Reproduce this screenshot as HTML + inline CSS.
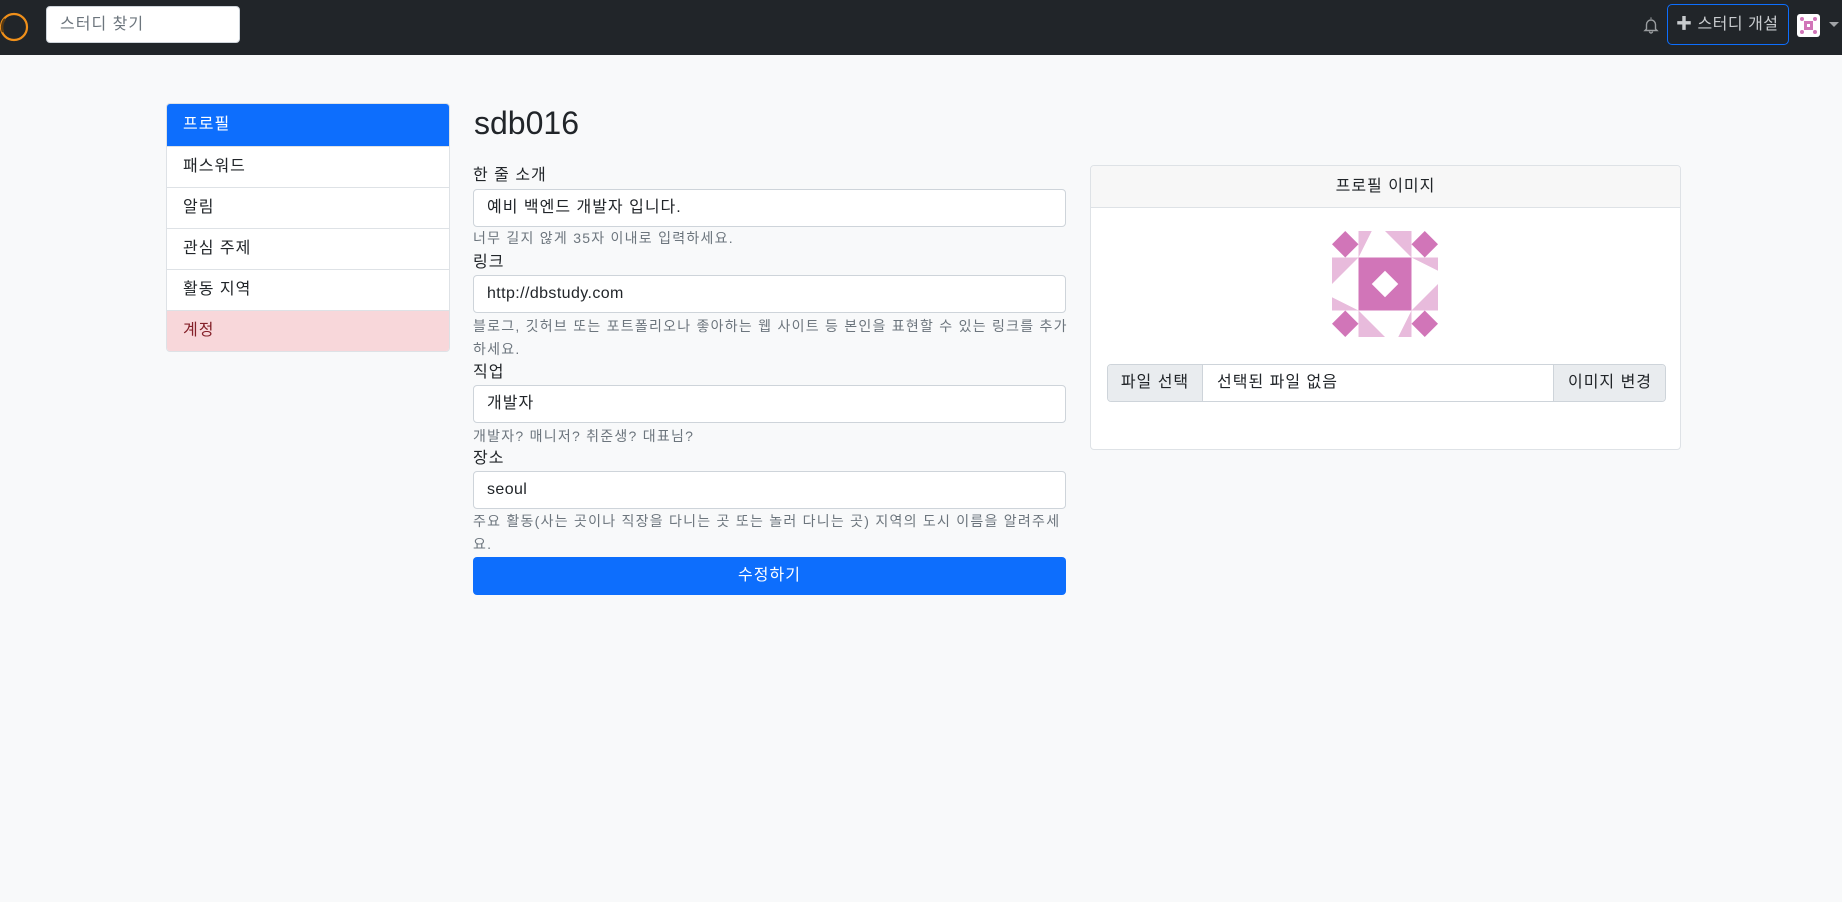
<!DOCTYPE html>
<html><head><meta charset="utf-8">
<style>
*{box-sizing:border-box;margin:0;padding:0}
body{width:1842px;height:902px;background:#f8f9fa;font-family:"Liberation Sans","Noto Sans CJK KR",sans-serif;color:#212529;font-size:16px;position:relative;overflow:hidden;letter-spacing:1px}
.nav{position:absolute;left:0;top:0;width:1842px;height:55px;background:#212529}
.abs{position:absolute}
.search{left:46px;top:6px;width:194px;height:37px;background:#fff;border:1px solid #ced4da;border-radius:4px;color:#6c757d;font-size:16px;line-height:35px;padding-left:13px}
.side{left:166px;top:103px;width:284px;border:1px solid #dee2e6;border-radius:4px;overflow:hidden;background:#fff}
.side div{height:41px;line-height:40px;padding-left:16px;border-top:1px solid #dee2e6;font-size:16px}
.side div:first-child{border-top:none;background:#0d6efd;color:#fff;height:42px;line-height:42px}
.side div.acc{background:#f8d7da;color:#842029}
.lab{left:473px;font-size:16px;line-height:24px}
.inp{left:473px;width:593px;height:38px;background:#fff;border:1px solid #ced4da;border-radius:4px;font-size:16px;line-height:36px;padding-left:13px}
.help{left:473px;font-size:14px;color:#6c757d;line-height:23px;white-space:nowrap;letter-spacing:1.25px}
.btn{left:473px;top:557px;width:593px;height:38px;background:#0d6efd;border-radius:4px;color:#fff;text-align:center;line-height:38px;font-size:16px}
.card{left:1090px;top:165px;width:591px;height:285px;background:#fff;border:1px solid #dee2e6;border-radius:4px;overflow:hidden}
.card .hd{height:42px;background:#f7f7f7;border-bottom:1px solid #dee2e6;text-align:center;line-height:41px;font-size:16px}
.lat{letter-spacing:0.4px}
</style></head><body>
<div class="nav">
<svg class="abs" style="left:0;top:12px" width="30" height="30" viewBox="0 0 30 30"><circle cx="14" cy="15" r="13" fill="none" stroke="#f0901a" stroke-width="2.2"/><path d="M3 20 A13 13 0 0 1 5 7" fill="none" stroke="#5a3a10" stroke-width="2.4"/></svg>
<div class="abs search">스터디 찾기</div>
<svg class="abs" style="left:1643px;top:16px" width="16" height="18" viewBox="0 0 16 18"><path d="M8 1.5v1.2M3.5 13V8.5a4.5 4.5 0 0 1 9 0V13l1.5 1.5H2z M6.5 15.5a1.5 1.5 0 0 0 3 0" fill="none" stroke="#9a9da0" stroke-width="1.4"/></svg>
<div class="abs" style="left:1667px;top:4px;width:122px;height:41px;border:1px solid #0d6efd;border-radius:5px;color:#c8cbce;font-size:16px;line-height:39px;padding-left:8px;white-space:nowrap;letter-spacing:0.5px"><span style="font-weight:bold;color:#c8cbce">✚</span> 스터디 개설</div>
<div class="abs" style="left:1797px;top:14px;width:23px;height:23px;background:#fff;border-radius:3px">
<svg width="23" height="23" viewBox="0 0 23 23"><rect x="7" y="7" width="9" height="9" fill="#d175b8"/><rect x="10" y="10" width="3" height="3" fill="#fff"/><circle cx="5" cy="5" r="2" fill="#d175b8"/><circle cx="18" cy="5" r="2" fill="#d175b8"/><circle cx="5" cy="18" r="2" fill="#d175b8"/><circle cx="18" cy="18" r="2" fill="#d175b8"/></svg></div>
<svg class="abs" style="left:1829px;top:22px" width="10" height="6" viewBox="0 0 10 6"><path d="M0 0h10L5 5z" fill="#a0a3a6"/></svg>
</div>

<div class="abs side">
<div>프로필</div><div>패스워드</div><div>알림</div><div>관심 주제</div><div>활동 지역</div><div class="acc">계정</div>
</div>

<div class="abs" style="left:474px;top:103px;font-size:32px;line-height:40px;letter-spacing:0">sdb016</div>

<div class="abs lab" style="top:164px">한 줄 소개</div>
<div class="abs inp" style="top:189px">예비 백엔드 개발자 입니다.</div>
<div class="abs help" style="top:227px">너무 길지 않게 35자 이내로 입력하세요.</div>
<div class="abs lab" style="top:251px">링크</div>
<div class="abs inp lat" style="top:275px">http://dbstudy.com</div>
<div class="abs help" style="top:315px">블로그, 깃허브 또는 포트폴리오나 좋아하는 웹 사이트 등 본인을 표현할 수 있는 링크를 추가<br>하세요.</div>
<div class="abs lab" style="top:361px">직업</div>
<div class="abs inp" style="top:385px">개발자</div>
<div class="abs help" style="top:425px">개발자? 매니저? 취준생? 대표님?</div>
<div class="abs lab" style="top:447px">장소</div>
<div class="abs inp lat" style="top:471px">seoul</div>
<div class="abs help" style="top:510px">주요 활동(사는 곳이나 직장을 다니는 곳 또는 놀러 다니는 곳) 지역의 도시 이름을 알려주세<br>요.</div>
<div class="abs btn">수정하기</div>

<div class="abs card"><div class="hd">프로필 이미지</div></div>
<svg class="abs" style="left:1332px;top:231px" width="106" height="106" viewBox="0 0 4 4" preserveAspectRatio="none">
<g fill="#e8bbdc">
<polygon points="1,0 1.5,0 1,1"/><polygon points="2,0 3,0 3,1"/>
<polygon points="3,1 4,1 4,1.5"/><polygon points="4,2 4,3 3,3"/>
<polygon points="3,4 2.5,4 3,3"/><polygon points="2,4 1,4 1,3"/>
<polygon points="1,3 0,3 0,2.5"/><polygon points="0,2 0,1 1,1"/>
</g>
<rect x="1" y="1" width="2" height="2" fill="#d175b8"/>
<polygon points="2,1.5 2.5,2 2,2.5 1.5,2" fill="#fff"/>
<g fill="#d175b8">
<polygon points="0.5,0 1,0.5 0.5,1 0,0.5"/><polygon points="3.5,0 4,0.5 3.5,1 3,0.5"/>
<polygon points="0.5,3 1,3.5 0.5,4 0,3.5"/><polygon points="3.5,3 4,3.5 3.5,4 3,3.5"/>
</g></svg>
<div class="abs" style="left:1107px;top:364px;width:559px;height:38px;border:1px solid #ced4da;border-radius:4px;background:#fff;overflow:hidden;font-size:16px;line-height:36px">
<div class="abs" style="left:0;top:0;width:95px;height:36px;background:#e9ecef;border-right:1px solid #ced4da;text-align:center">파일 선택</div>
<div class="abs" style="left:109px;top:0">선택된 파일 없음</div>
<div class="abs" style="left:445px;top:0;width:113px;height:36px;background:#e9ecef;border-left:1px solid #ced4da;text-align:center">이미지 변경</div>
</div>
</body></html>
